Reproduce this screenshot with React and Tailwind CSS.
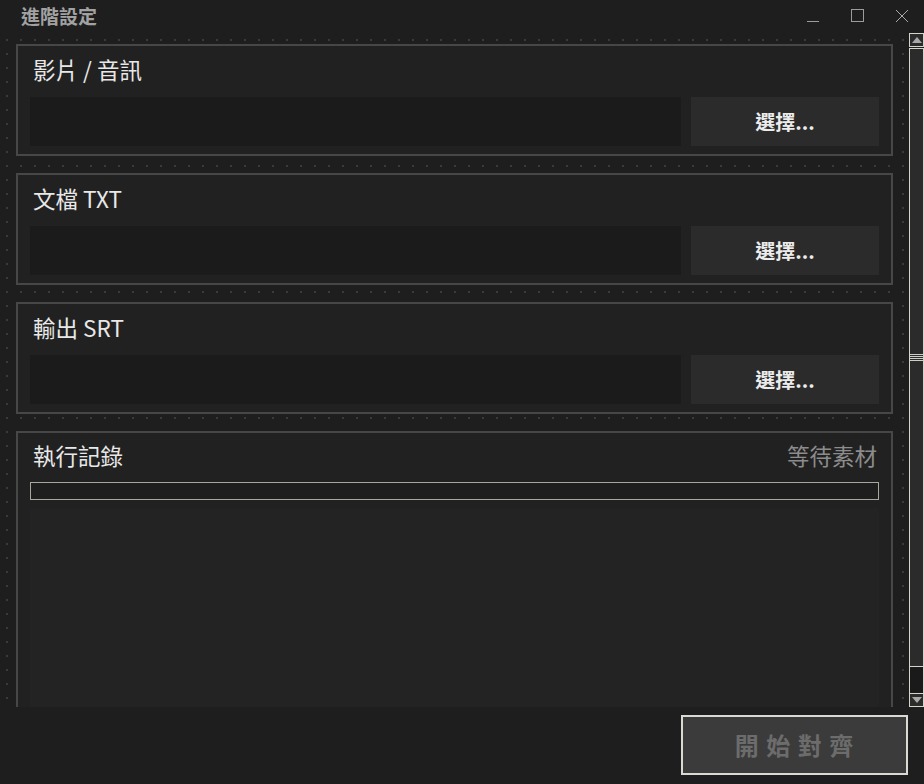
import React from 'react';

const FONT = "font-['Noto_Sans_CJK_TC','Noto_Sans',sans-serif]";

const FileRow = ({ title }) => (
  <div className="border-2 border-[#474747] bg-[#212121] h-[112px] flex flex-col">
    <div className="h-[51px] flex items-center pl-[15px] pb-[5px] text-[22.5px] leading-none text-[#e8e8e8]">
      {title}
    </div>
    <div className="flex gap-[10px] px-[12px] h-[49px]">
      <div className="flex-1 bg-[#1b1b1b]" />
      <button className="w-[188px] bg-[#2b2b2b] text-[20px] font-bold leading-none text-[#ececec]">
        選擇...
      </button>
    </div>
  </div>
);

const Scrollbar = () => (
  <div className="w-[16px] h-full pl-[1px] flex flex-col">
    <div className="h-[14px] border border-[#d6d5cd] bg-[#2b2b2b] flex items-center justify-center">
      <svg width="10" height="6" viewBox="0 0 10 6">
        <path d="M0 6 L5 0 L10 6 Z" fill="#a8a8a8" />
      </svg>
    </div>
    <div className="flex-1 mt-px border-x border-[#d6d5cd] bg-[#1a1a1a] flex flex-col">
      <div className="h-[619px] border-y border-[#d6d5cd] bg-[#2b2b2b] flex flex-col items-stretch justify-center gap-px">
        <div className="h-px bg-[#cfcfc8]" />
        <div className="h-px bg-[#cfcfc8]" />
        <div className="h-px bg-[#cfcfc8]" />
        <div className="h-px bg-[#cfcfc8]" />
      </div>
      <div className="flex-1" />
    </div>
    <div className="h-[14px] border border-[#d6d5cd] bg-[#2b2b2b] flex items-center justify-center">
      <svg width="10" height="6" viewBox="0 0 10 6">
        <path d="M0 0 L5 6 L10 0 Z" fill="#a8a8a8" />
      </svg>
    </div>
  </div>
);

export default function App() {
  return (
    <div className={`w-[924px] h-[784px] bg-[#1e1e1e] flex flex-col overflow-hidden ${FONT}`}>
      {/* title bar */}
      <div className="h-[33px] flex items-center shrink-0 pb-[2px]">
        <div className="pl-[21px] text-[19px] font-bold leading-none text-[#a2a2a2]">進階設定</div>
        <div className="ml-auto flex items-center">
          <div className="w-[12px] h-[13px] mr-[32px] flex items-end">
            <div className="w-full h-px bg-[#9c9c9c]" />
          </div>
          <div className="w-[13px] h-[13px] border border-[#9c9c9c] mr-[31px]" />
          <svg width="14" height="14" viewBox="0 0 14 14" className="mr-[15px]">
            <path d="M1 1 L13 13 M13 1 L1 13" stroke="#a8a8a8" strokeWidth="1" />
          </svg>
        </div>
      </div>

      {/* scroll region */}
      <div className="h-[674px] flex shrink-0">
        <div className="w-[908px] h-full overflow-hidden bg-[radial-gradient(circle,#3a3a3a_1px,transparent_1.5px)] bg-[length:14px_14px]">
          <div className="pl-[16px] pr-[15px] pt-[11px] flex flex-col gap-[17px]">
            <FileRow title="影片 / 音訊" />
            <FileRow title="文檔 TXT" />
            <FileRow title="輸出 SRT" />
            <div className="border-2 border-[#474747] bg-[#212121] h-[320px] flex flex-col">
              <div className="h-[49px] flex items-center pl-[15px] pr-[14px] pb-[5px] text-[22.5px] leading-none">
                <span className="text-[#e8e8e8]">執行記錄</span>
                <span className="ml-auto text-[#8c8c8c]">等待素材</span>
              </div>
              <div className="mx-[12px] h-[18px] border border-[#a9a69c] bg-[#1e1e1e]" />
              <div className="mx-[12px] mt-[8px] flex-1 bg-[#232323]" />
            </div>
          </div>
        </div>
        <Scrollbar />
      </div>

      {/* footer */}
      <div className="flex-1 flex justify-end items-start pt-[8px] pr-[16px]">
        <button className="w-[227px] h-[60px] border-2 border-[#dad9d2] bg-[#3b3b3b] text-[24px] font-bold leading-none tracking-[1px] text-[#6c6c6c]">
          開 始 對 齊
        </button>
      </div>
    </div>
  );
}
